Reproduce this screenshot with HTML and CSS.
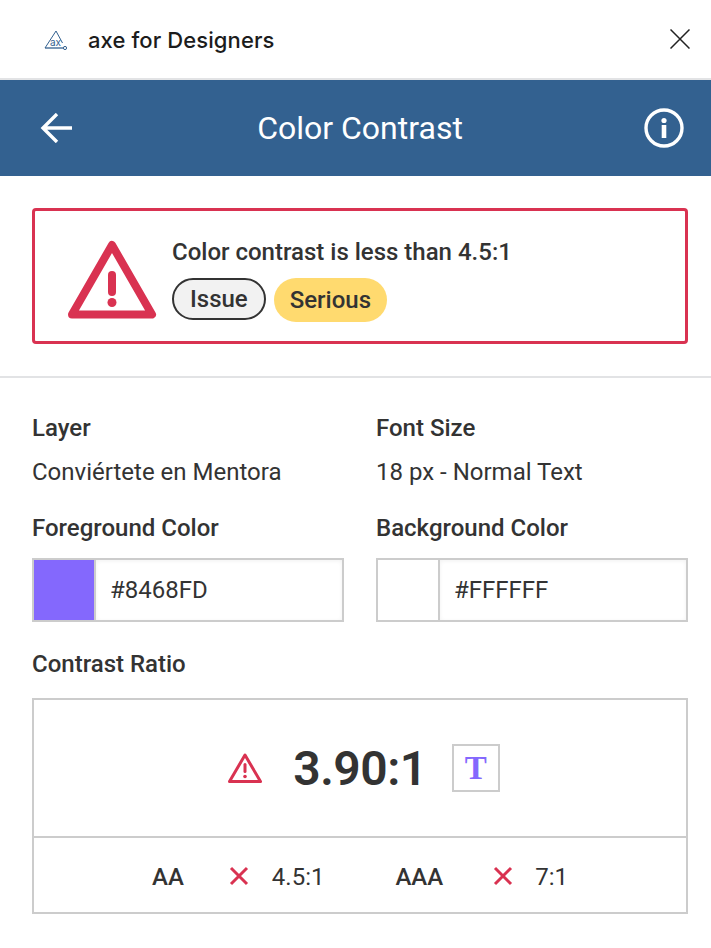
FILE: index.html
```html
<!DOCTYPE html>
<html>
    <head>
        <meta charset="utf-8" />
        <title>axe for Designers</title>
        <link rel="stylesheet" href="styles.css">
    </head>
    <body>
        <div class="titlebar">
            <svg class="logo" width="24" height="24" viewBox="0 0 24 24" fill="none" stroke="#336190">
                <path d="M1 21 L12 4 L18.5 16" stroke-width="1"/>
                <path d="M1 21 H19" stroke-width="1.3"/>
                <circle cx="21" cy="21" r="1.6" stroke-width="1"/>
                <text x="11.5" y="18.5" class="logo-text">ax</text>
            </svg>
            <span class="app-name">axe for Designers</span>
            <svg class="close" width="20" height="20" viewBox="0 0 20 20" fill="none" stroke="#222" stroke-width="1.5">
                <path d="M0.5 0.5 L19.5 19.5 M19.5 0.5 L0.5 19.5"/>
            </svg>
        </div>
        <div class="header">
            <svg width="32" height="30" viewBox="0 0 32 30" fill="none" stroke="#fff" stroke-width="3.4">
                <path d="M32 15 H3 M17 1 L3 15 L17 29"/>
            </svg>
            <h1>Color Contrast</h1>
            <svg width="40" height="40" viewBox="0 0 40 40" fill="none">
                <circle cx="20" cy="20" r="18" stroke="#fff" stroke-width="3.4"/>
                <circle cx="20" cy="12.5" r="2.6" fill="#fff"/>
                <rect x="17.7" y="17" width="4.6" height="13" fill="#fff"/>
            </svg>
        </div>
        <div class="section">
            <div class="alert">
                <svg class="alert-icon" width="90" height="80" viewBox="0 0 90 80" fill="none">
                    <path d="M45 5 L85 74.5 H5 Z" stroke="#d93251" stroke-width="8" stroke-linejoin="round"/>
                    <rect x="41" y="31" width="8" height="25" rx="4" fill="#d93251"/>
                    <circle cx="45" cy="62.500" r="4.500" fill="#d93251"/>
                </svg>
                <div>
                    <div class="alert-title">Color contrast is less than 4.5:1</div>
                    <div class="tags">
                        <span class="tag tag-issue">Issue</span>
                        <span class="tag tag-serious">Serious</span>
                    </div>
                </div>
            </div>
        </div>
        <div class="details">
            <div class="field">
                <div class="label">Layer</div>
                <div class="value">Conviértete en Mentora</div>
            </div>
            <div class="field">
                <div class="label">Font Size</div>
                <div class="value">18 px - Normal Text</div>
            </div>
            <div class="field">
                <div class="label">Foreground Color</div>
                <div class="color-input">
                    <div class="swatch swatch-fg"></div>
                    <div class="hex">#8468FD</div>
                </div>
            </div>
            <div class="field">
                <div class="label">Background Color</div>
                <div class="color-input">
                    <div class="swatch"></div>
                    <div class="hex">#FFFFFF</div>
                </div>
            </div>
        </div>
        <div class="ratio">
            <div class="label">Contrast Ratio</div>
            <div class="ratio-box">
                <div class="ratio-main">
                    <svg width="36" height="32" viewBox="0 0 36 32" fill="none">
                        <path d="M18 3 L33.500 29.500 H2.500 Z" stroke="#d93251" stroke-width="3" stroke-linejoin="round"/>
                        <rect x="16.500" y="11" width="3" height="10" rx="1.500" fill="#d93251"/>
                        <circle cx="18" cy="24.500" r="1.800" fill="#d93251"/>
                    </svg>
                    <span class="ratio-num">3.90:1</span>
                    <span class="sample">T</span>
                </div>
                <div class="ratio-levels">
                    <span class="level">AA</span>
                    <svg class="cross" width="20" height="20" viewBox="0 0 20 20" fill="none" stroke="#d93251" stroke-width="3">
                        <path d="M2 2 L18 18 M18 2 L2 18"/>
                    </svg>
                    <span class="need">4.5:1</span>
                    <span class="level level-aaa">AAA</span>
                    <svg class="cross" width="20" height="20" viewBox="0 0 20 20" fill="none" stroke="#d93251" stroke-width="3">
                        <path d="M2 2 L18 18 M18 2 L2 18"/>
                    </svg>
                    <span class="need">7:1</span>
                </div>
            </div>
        </div>
    </body>
</html>
```
FILE: styles.css
```css
body {
    margin: 0;
    background: #fff;
    color: #333;
    font-family: Roboto, "Liberation Sans", sans-serif;
    font-size: 24px;
    overflow: hidden;
}

.titlebar {
    display: flex;
    align-items: center;
    height: 78px;
    padding: 0 21px 0 44px;
    border-bottom: 2px solid #e2e3e5;
}
.logo { margin-right: 20px; }
.logo-text {
    font-family: Inter, sans-serif;
    font-size: 10px;
    fill: #336190;
    stroke: none;
    text-anchor: middle;
}
.app-name {
    flex: 1;
    padding-top: 2px;
    font-family: Inter, sans-serif;
    font-size: 22px;
    font-weight: 450;
    letter-spacing: 0.1px;
    color: #1c1c1c;
}

.header {
    display: flex;
    align-items: center;
    justify-content: space-between;
    height: 96px;
    padding: 0 27px 0 40px;
    background: #336190;
}
.header h1 {
    margin: 0 0 0 4px;
    color: #fff;
    font-size: 32px;
    font-weight: 400;
}

.section {
    padding: 32px 23px 32px 32px;
    border-bottom: 2px solid #e2e3e5;
}
.alert {
    display: flex;
    align-items: center;
    height: 136px;
    box-sizing: border-box;
    padding-left: 35px;
    border: 3px solid #d93251;
    border-radius: 4px;
}
.alert-icon { margin: 8px 15px 0 -3px; }
.alert-title {
    padding-top: 7px;
    font-weight: 500;
    line-height: 28px;
}
.tags {
    display: flex;
    gap: 8px;
    margin-top: 12px;
}
.tag {
    display: flex;
    align-items: center;
    height: 44px;
    box-sizing: border-box;
    padding: 0 16px;
    border-radius: 22px;
    font-weight: 500;
}
.tag-issue {
    height: 42px;
    border: 2px solid #333;
    background: #f2f2f2;
}
.tag-serious { background: #ffda6f; }

.details {
    display: grid;
    grid-template-columns: 312px 312px;
    column-gap: 32px;
    row-gap: 24px;
    padding: 34px 23px 0 32px;
}
.label {
    font-weight: 500;
    line-height: 32px;
}
.value {
    margin-top: 12px;
    line-height: 32px;
}
.color-input {
    display: flex;
    height: 64px;
    box-sizing: border-box;
    margin-top: 14px;
    border: 2px solid #ccc;
}
.swatch {
    width: 60px;
    border-right: 2px solid #ccc;
}
.swatch-fg { background: #8468fd; }
.hex {
    flex: 1;
    padding-left: 14px;
    line-height: 60px;
    box-shadow: inset 0 1px 4px rgba(0, 0, 0, 0.06);
}

.ratio { padding: 26px 23px 0 32px; }
.ratio-box {
    margin-top: 18px;
    border: 2px solid #ccc;
}
.ratio-main {
    display: flex;
    align-items: center;
    justify-content: center;
    height: 136px;
    padding-left: 7px;
    border-bottom: 2px solid #ccc;
}
.ratio-num {
    margin: 0 25px 0 30px;
    font-size: 48px;
    font-weight: 600;
    letter-spacing: -0.5px;
}
.sample {
    width: 48px;
    height: 48px;
    box-sizing: border-box;
    border: 2px solid #ccc;
    color: #8468fd;
    font-family: "Liberation Serif", serif;
    font-size: 33px;
    font-weight: 700;
    line-height: 44px;
    text-align: center;
}
.ratio-levels {
    display: flex;
    align-items: center;
    justify-content: center;
    height: 74px;
    padding-top: 4px;
    box-sizing: border-box;
}
.level { font-weight: 500; }
.level-aaa { margin-left: 71px; }
.cross { margin: -2px 23px 0 45px; }
.level-aaa + .cross { margin-left: 50px; margin-right: 22px; }
```
